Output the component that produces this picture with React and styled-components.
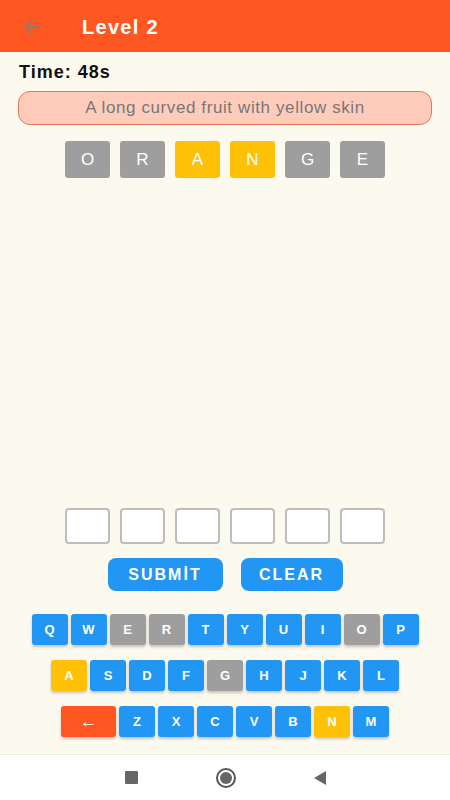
import React from 'react';
import styled, { createGlobalStyle } from 'styled-components';
import { ArrowLeft } from 'lucide-react';

const GlobalStyle = createGlobalStyle`
  body {
    margin: 0;
    background: #fcf9ef;
    font-family: "Liberation Sans", Arial, sans-serif;
  }
`;

const Screen = styled.div`
  width: 450px;
  height: 800px;
  display: flex;
  flex-direction: column;
  background: #fcf9ef;
`;

const Header = styled.header`
  height: 52px;
  flex-shrink: 0;
  display: flex;
  align-items: center;
  background: #ff5722;
  padding: 2px 0 0 21px;
  box-sizing: border-box;
  gap: 39px;
  color: #fff;

  & > svg {
    color: #8d7b72;
  }
`;

const Title = styled.h1`
  margin: 0;
  font-size: 20px;
  font-weight: 700;
  letter-spacing: 1.3px;
`;

const Main = styled.main`
  flex: 1;
  display: flex;
  flex-direction: column;
  padding: 10px 18px 17px;
`;

const Timer = styled.div`
  font-size: 18px;
  font-weight: 700;
  color: #111;
  padding-left: 1px;
  line-height: 20px;
  letter-spacing: 1px;
`;

const Hint = styled.div`
  margin-top: 9px;
  height: 34px;
  box-sizing: border-box;
  display: flex;
  align-items: center;
  justify-content: center;
  background: #ffccbc;
  border: 1px solid #e0785c;
  border-radius: 12px;
  color: #777;
  font-size: 17px;
  letter-spacing: 0.6px;
`;

const TileRow = styled.div`
  display: flex;
  justify-content: center;
  gap: ${(p) => p.$gap || 10}px;
  margin-top: ${(p) => p.$top || 0}px;
`;

const Tile = styled.div`
  width: 45px;
  height: 37px;
  border-radius: 3px;
  display: flex;
  align-items: center;
  justify-content: center;
  background: ${(p) => (p.$hit ? '#ffc107' : '#9e9e9e')};
  color: #fff;
  font-size: 17px;
`;

const Spacer = styled.div`
  flex: 1;
`;

const Slot = styled.div`
  width: 45px;
  height: 36px;
  box-sizing: border-box;
  border: 2px solid #bdbdbd;
  border-radius: 4px;
  background: #fff;
`;

const ActionButton = styled.button`
  width: ${(p) => p.$w}px;
  height: 33px;
  border: none;
  border-radius: 8px;
  background: #2196f3;
  color: #fff;
  font-family: "Liberation Sans", Arial, sans-serif;
  font-size: 16px;
  font-weight: 700;
  letter-spacing: 2px;
  padding: 0;
`;

const Keyboard = styled.div`
  margin-top: 23px;
  display: flex;
  flex-direction: column;
  align-items: center;
  gap: 15px;
`;

const KeyRow = styled.div`
  display: flex;
  gap: 3px;
`;

const Key = styled.div`
  width: ${(p) => p.$w || 36}px;
  height: 31px;
  border-radius: 3px;
  display: flex;
  align-items: center;
  justify-content: center;
  background: ${(p) => p.$bg};
  color: #fff;
  font-size: ${(p) => p.$size || 13}px;
  font-weight: 700;
  box-shadow: 0 2px 3px rgba(0, 0, 0, 0.22);
`;

const NavBar = styled.nav`
  height: 45px;
  flex-shrink: 0;
  background: #fff;
  border-top: 1px solid #eeeae0;
  display: flex;
  align-items: center;
  justify-content: center;
  gap: 78px;
`;

const NavSquare = styled.div`
  width: 13px;
  height: 13px;
  background: #666;
  border-radius: 1px;
`;

const NavHome = styled.div`
  width: 20px;
  height: 20px;
  box-sizing: border-box;
  border: 2px solid #555;
  border-radius: 50%;
  display: flex;
  align-items: center;
  justify-content: center;

  &::after {
    content: '';
    width: 12px;
    height: 12px;
    border-radius: 50%;
    background: #666;
  }
`;

const NavBack = styled.div`
  width: 0;
  height: 0;
  border-top: 7px solid transparent;
  border-bottom: 7px solid transparent;
  border-right: 12px solid #666;
`;

const word = [
  ['O', false],
  ['R', false],
  ['A', true],
  ['N', true],
  ['G', false],
  ['E', false],
];

const gray = new Set(['E', 'R', 'O', 'G']);
const yellow = new Set(['A', 'N']);

const keyColor = (k) => {
  if (yellow.has(k)) return '#ffc107';
  if (gray.has(k)) return '#9e9e9e';
  return '#2196f3';
};

const rows = ['QWERTYUIOP', 'ASDFGHJKL', 'ZXCVBNM'];

export default function App() {
  return (
    <Screen>
      <GlobalStyle />
      <Header>
        <ArrowLeft size={22} strokeWidth={2} />
        <Title>Level 2</Title>
      </Header>
      <Main>
        <Timer>Time: 48s</Timer>
        <Hint>A long curved fruit with yellow skin</Hint>
        <TileRow $top={16}>
          {word.map(([l, hit], i) => (
            <Tile key={i} $hit={hit}>
              {l}
            </Tile>
          ))}
        </TileRow>
        <Spacer />
        <TileRow>
          {word.map((_, i) => (
            <Slot key={i} />
          ))}
        </TileRow>
        <TileRow $top={14} $gap={18}>
          <ActionButton $w={115}>SUBMİT</ActionButton>
          <ActionButton $w={102}>CLEAR</ActionButton>
        </TileRow>
        <Keyboard>
          {rows.map((row, ri) => (
            <KeyRow key={ri}>
              {ri === 2 && (
                <Key $w={55} $bg="#ff5722" $size={17}>
                  ←
                </Key>
              )}
              {row.split('').map((k) => (
                <Key key={k} $bg={keyColor(k)}>
                  {k}
                </Key>
              ))}
            </KeyRow>
          ))}
        </Keyboard>
      </Main>
      <NavBar>
        <NavSquare />
        <NavHome />
        <NavBack />
      </NavBar>
    </Screen>
  );
}
